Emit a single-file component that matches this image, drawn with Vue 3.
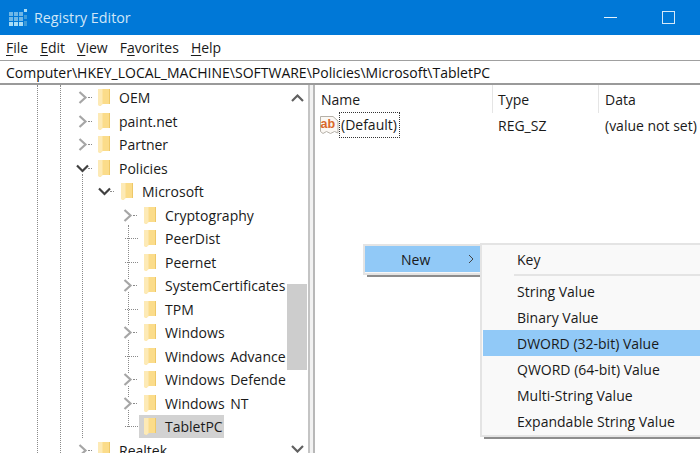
<script setup>
const rows = [
  { name: 'OEM', depth: 0, arrow: 'closed' },
  { name: 'paint.net', depth: 0, arrow: 'closed' },
  { name: 'Partner', depth: 0, arrow: 'closed' },
  { name: 'Policies', depth: 0, arrow: 'open' },
  { name: 'Microsoft', depth: 1, arrow: 'open' },
  { name: 'Cryptography', depth: 2, arrow: 'closed' },
  { name: 'PeerDist', depth: 2, arrow: 'none' },
  { name: 'Peernet', depth: 2, arrow: 'none' },
  { name: 'SystemCertificates', depth: 2, arrow: 'closed' },
  { name: 'TPM', depth: 2, arrow: 'none' },
  { name: 'Windows', depth: 2, arrow: 'closed' },
  { name: 'Windows Advanced Threat Protection', depth: 2, arrow: 'none' },
  { name: 'Windows Defender', depth: 2, arrow: 'closed' },
  { name: 'Windows NT', depth: 2, arrow: 'closed' },
  { name: 'TabletPC', depth: 2, arrow: 'none', selected: true },
  { name: 'Realtek', depth: 0, arrow: 'closed' }
]
const menus = ['File', 'Edit', 'View', 'Favorites', 'Help']
const keys = { File: 'F', Edit: 'E', View: 'V', Favorites: 'a', Help: 'H' }
const splitMenu = (m) => {
  const i = m.indexOf(keys[m])
  return [m.slice(0, i), m[i], m.slice(i + 1)]
}
const submenu = ['String Value', 'Binary Value', 'DWORD (32-bit) Value', 'QWORD (64-bit) Value', 'Multi-String Value', 'Expandable String Value']
</script>

<template>
  <div class="window">
    <header class="titlebar">
      <svg class="logo" width="20" height="20" viewBox="0 0 20 20">
        <g fill="#6fb7e6">
          <rect x="0" y="4" width="4" height="4" /><rect x="5" y="4" width="4" height="4" /><rect x="10" y="4" width="4" height="4" />
          <rect x="0" y="9" width="4" height="4" /><rect x="5" y="9" width="4" height="4" /><rect x="10" y="9" width="4" height="4" />
        </g>
        <g fill="#a8dcf5">
          <rect x="0" y="14" width="4" height="4" /><rect x="5" y="14" width="4" height="4" /><rect x="10" y="14" width="4" height="4" />
          <rect x="15" y="1" width="3" height="3" />
        </g>
        <g fill="#3f9bd8">
          <rect x="15" y="7" width="3" height="4" /><rect x="15" y="13" width="3" height="5" />
        </g>
      </svg>
      <span class="title">Registry Editor</span>
      <span class="spacer"></span>
      <span class="minimize"></span>
      <span class="maximize"></span>
    </header>

    <nav class="menubar">
      <span v-for="m in menus" :key="m" class="menu-item">{{ splitMenu(m)[0] }}<u>{{ splitMenu(m)[1] }}</u>{{ splitMenu(m)[2] }}</span>
    </nav>

    <div class="address">Computer\HKEY_LOCAL_MACHINE\SOFTWARE\Policies\Microsoft\TabletPC</div>

    <main class="panes">
      <aside class="tree">
        <span class="guide guide-a"></span>
        <span class="guide guide-b"></span>
        <span class="guide guide-c"></span>
        <span class="guide guide-d"></span>
        <div class="tree-rows">
          <div v-for="r in rows" :key="r.name" class="row" :class="'depth-' + r.depth">
            <span class="arrow">
              <svg v-if="r.arrow === 'closed'" width="11" height="13" viewBox="0 0 11 13"><path d="M2.5 1 L8.5 6.5 L2.5 12" fill="none" stroke="#a6a6a6" stroke-width="2.2" /></svg>
              <svg v-else-if="r.arrow === 'open'" width="13" height="11" viewBox="0 0 13 11"><path d="M1 2.5 L6.5 8 L12 2.5" fill="none" stroke="#404040" stroke-width="2.2" /></svg>
              <i v-else class="dash"></i>
            </span>
            <i v-if="r.arrow !== 'none'" class="dots"></i>
            <span class="entry" :class="{ selected: r.selected }">
              <svg class="folder" width="13" height="19" viewBox="0 0 13 19">
                <path d="M0 1 H12 V16 H4 L2.5 18 L0 17 Z" fill="#fbdc8a" />
                <path d="M0 1 H4.5 V16.5 L2.5 18 L0 17 Z" fill="#fdeab6" />
                <path d="M11 1 H12 V16 H11 Z" fill="#eec868" />
              </svg>
              <span class="name">{{ r.name }}</span>
            </span>
          </div>
        </div>
        <div class="scrollbar">
          <svg class="scroll-up" width="15" height="10" viewBox="0 0 15 10"><path d="M2 8 L7.5 2.5 L13 8" fill="none" stroke="#606060" stroke-width="2.2" /></svg>
          <div class="thumb"></div>
          <svg class="scroll-down" width="15" height="10" viewBox="0 0 15 10"><path d="M2 2 L7.5 7.5 L13 2" fill="none" stroke="#606060" stroke-width="2.2" /></svg>
        </div>
      </aside>
      <div class="splitter"></div>
      <section class="list">
        <div class="list-head">
          <span class="col col-name">Name</span>
          <span class="col col-type">Type</span>
          <span class="col col-data">Data</span>
        </div>
        <div class="list-row">
          <span class="cell-name">
            <svg class="ab" width="19" height="21" viewBox="0 0 19 21">
              <path d="M0.5 1.5 H13 L18 6 V18 L14.5 16.5 L10.5 18.5 L6.5 16.5 L3 18.5 L0.5 16.5 Z" fill="#fbf8f4" stroke="#b5b0a8" stroke-width="1" />
              <text x="0.5" y="12.5" class="ab-text">ab</text>
            </svg>
            <span class="focus">(Default)</span>
          </span>
          <span class="cell-type">REG_SZ</span>
          <span class="cell-data">(value not set)</span>
        </div>
      </section>
    </main>

    <div class="ctx ctx-new">
      <div class="ctx-new-item">
        <span>New</span>
        <svg width="6" height="10" viewBox="0 0 6 10"><path d="M1 1 L5 5 L1 9" fill="none" stroke="#444" stroke-width="1" /></svg>
      </div>
    </div>

    <div class="ctx ctx-sub">
      <div class="sub-item key">Key</div>
      <div class="sep"></div>
      <div v-for="s in submenu" :key="s" class="sub-item" :class="{ active: s.startsWith('DWORD') }">{{ s }}</div>
    </div>
  </div>
</template>

<style>
html, body { margin: 0; padding: 0; overflow: hidden; background: #fff; }
</style>

<style scoped>
.window {
  position: relative;
  width: 700px;
  height: 453px;
  overflow: hidden;
  background: #fff;
  font-family: "Open Sans", "Noto Sans", sans-serif;
  font-size: 14px;
  color: #1a1a1a;
  display: flex;
  flex-direction: column;
}
.titlebar {
  height: 35px;
  flex: none;
  background: #0078d7;
  display: flex;
  align-items: center;
  padding-left: 9px;
  box-sizing: border-box;
}
.logo { flex: none; }
.title { color: #cfe6f7; font-size: 14.3px; margin-left: 5px; }
.spacer { flex: 1; }
.minimize { width: 13px; height: 1px; background: #e6f2fb; margin-right: 45px; }
.maximize { width: 11px; height: 11px; border: 1px solid #d5e9f8; margin-right: 25px; }

.menubar {
  height: 25px;
  flex: none;
  display: flex;
  align-items: center;
  padding-left: 6px;
  gap: 12px;
  box-sizing: border-box;
  font-size: 14px;
}
.menu-item u { text-underline-offset: 2px; }

.address {
  flex: none;
  height: 25px;
  box-sizing: border-box;
  border-top: 1px solid #a0a0a0;
  border-bottom: 2px solid #9a9a9a;
  padding-left: 6px;
  line-height: 24px;
  font-size: 14px;
  color: #111;
  white-space: nowrap;
}

.panes { flex: 1; display: flex; min-height: 0; }

.tree {
  position: relative;
  width: 308px;
  flex: none;
  overflow: hidden;
}
.guide { position: absolute; border-left: 1px dotted #8a8a8a; width: 0; }
.guide-a { left: 37px; top: 0; bottom: 0; }
.guide-b { left: 60px; top: 0; bottom: 0; }
.guide-c { left: 82px; top: 89px; height: 264px; }
.guide-d { left: 128px; top: 140px; height: 202px; }

.tree-rows {
  position: absolute;
  left: 0;
  top: 1px;
  width: 286px;
  overflow: hidden;
}
.row {
  height: 23.5px;
  display: flex;
  align-items: center;
  white-space: nowrap;
}
.depth-0 { padding-left: 76px; }
.depth-1 { padding-left: 98px; }
.depth-2 { padding-left: 121px; }

.arrow {
  width: 13px;
  flex: none;
  display: flex;
  align-items: center;
  justify-content: center;
}
.arrow svg { background: #fff; }
.dash {
  display: block;
  flex: none;
  width: 13px;
  margin-left: 7px;
  border-top: 1px dotted #8a8a8a;
}
.dots {
  display: block;
  flex: none;
  width: 4px;
  margin-left: -1px;
  margin-right: -3px;
  border-top: 1px dotted #8a8a8a;
}
.entry {
  margin-left: 7px;
  height: 23px;
  display: flex;
  align-items: center;
  padding: 0 4px 0 3px;
  background: transparent;
}
.depth-0 .entry { margin-left: 6px; }
.entry.selected { background: #d2d2d2; margin-left: 5px; padding-left: 5px; padding-right: 1px; }
.folder { flex: none; }
.name { margin-left: 8px; font-size: 14px; word-spacing: 2px; }

.scrollbar {
  position: absolute;
  left: 287px;
  top: 0;
  width: 21px;
  bottom: 0;
}
.scroll-up { position: absolute; left: 3px; top: 8px; }
.scroll-down { position: absolute; left: 3px; top: 359px; }
.thumb {
  position: absolute;
  left: 0;
  top: 199px;
  width: 20px;
  height: 86px;
  background: #cdcdcd;
}

.splitter {
  width: 7px;
  flex: none;
  box-sizing: border-box;
  border-left: 2px solid #c4c4c4;
  border-right: 2px solid #b8b8b8;
  background: #f2f2f2;
}

.list { flex: 1; min-width: 0; }
.list-head {
  display: flex;
  height: 28px;
  align-items: center;
  font-size: 14px;
}
.col { box-sizing: border-box; height: 100%; display: flex; align-items: center; }
.col-name { width: 178px; padding-left: 6px; border-right: 1px solid #e5e5e5; }
.col-type { width: 106px; padding-left: 5px; border-right: 1px solid #e5e5e5; }
.col-data { padding-left: 6px; }
.list-row { display: flex; align-items: center; height: 24px; font-size: 14px; }
.cell-name { display: flex; align-items: center; width: 178px; padding-left: 5px; box-sizing: border-box; }
.ab { flex: none; }
.ab-text { font-family: "Liberation Sans", sans-serif; font-weight: 700; font-size: 12.5px; fill: #d9682a; }
.focus { outline: 1px dotted #333; outline-offset: 0; margin-left: 1px; padding: 1px 2px 1px 1px; line-height: 22px; }
.cell-type { width: 106px; padding-left: 5px; box-sizing: border-box; }
.cell-data { padding-left: 6px; white-space: nowrap; }

.ctx {
  position: absolute;
  box-sizing: border-box;
  background: #f8f8f8;
  border: 2px solid #e4e4e4;
  box-shadow: 3px 3px 0 -1px #8d8d8d;
}
.ctx-new { left: 363px; top: 244px; width: 120px; height: 31px; }
.ctx-new-item {
  height: 26px;
  background: #91c9f7;
  display: flex;
  align-items: center;
  padding-left: 36px;
  padding-right: 7px;
  justify-content: space-between;
  font-size: 14px;
}
.ctx-sub {
  left: 480px;
  top: 243px;
  width: 240px;
  height: 194px;
  background: #f9f9f9;
  padding-top: 2px;
}
.sub-item {
  height: 26px;
  line-height: 28px;
  padding-left: 35px;
  font-size: 14px;
}
.sub-item.active { background: #91c9f7; margin-left: 1px; padding-left: 34px; }
.sub-item.key { height: 25px; line-height: 25px; }
.sep { height: 2px; background: #e4e4e4; margin: 2px 0 2px 32px; }
</style>
